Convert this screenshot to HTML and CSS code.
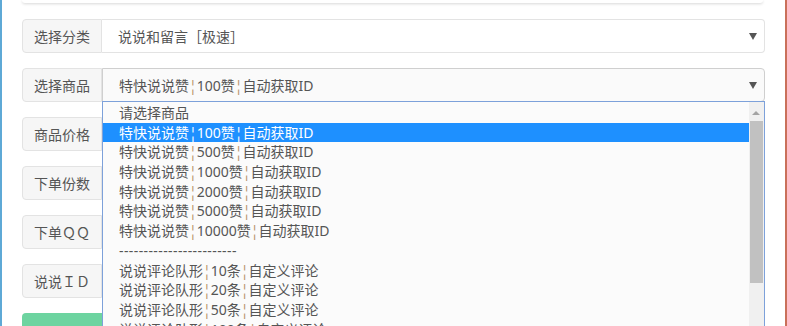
FILE: index.html
```html
<!DOCTYPE html>
<html lang="zh-CN">
<head>
<meta charset="utf-8">
<title>下单</title>
<link rel="stylesheet" href="styles.css">
</head>
<body>
<div class="page">
  <div class="top-card"></div>
  <form class="order-form">
    <div class="row">
      <span class="addon">选择分类</span>
      <div class="select">
        <span class="value">说说和留言［极速］</span>
        <span class="caret"></span>
      </div>
    </div>
    <div class="row">
      <span class="addon">选择商品</span>
      <div class="select open">
        <span class="value">特快说说赞<span class="sep">¦</span>100赞<span class="sep">¦</span>自动获取ID</span>
        <span class="caret"></span>
        <div class="dropdown">
          <div class="options">
            <div class="opt">请选择商品</div>
            <div class="opt active">特快说说赞<span class="sep">¦</span>100赞<span class="sep">¦</span>自动获取ID</div>
            <div class="opt">特快说说赞<span class="sep">¦</span>500赞<span class="sep">¦</span>自动获取ID</div>
            <div class="opt">特快说说赞<span class="sep">¦</span>1000赞<span class="sep">¦</span>自动获取ID</div>
            <div class="opt">特快说说赞<span class="sep">¦</span>2000赞<span class="sep">¦</span>自动获取ID</div>
            <div class="opt">特快说说赞<span class="sep">¦</span>5000赞<span class="sep">¦</span>自动获取ID</div>
            <div class="opt">特快说说赞<span class="sep">¦</span>10000赞<span class="sep">¦</span>自动获取ID</div>
            <div class="opt dashes">------------------------</div>
            <div class="opt">说说评论队形<span class="sep">¦</span>10条<span class="sep">¦</span>自定义评论</div>
            <div class="opt">说说评论队形<span class="sep">¦</span>20条<span class="sep">¦</span>自定义评论</div>
            <div class="opt">说说评论队形<span class="sep">¦</span>50条<span class="sep">¦</span>自定义评论</div>
            <div class="opt">说说评论队形<span class="sep">¦</span>100条<span class="sep">¦</span>自定义评论</div>
          </div>
          <div class="scrollbar">
            <span class="up"></span>
            <span class="thumb"></span>
          </div>
        </div>
      </div>
    </div>
    <div class="row">
      <span class="addon">商品价格</span>
      <div class="input"></div>
    </div>
    <div class="row">
      <span class="addon">下单份数</span>
      <div class="input"></div>
    </div>
    <div class="row">
      <span class="addon">下单ＱＱ</span>
      <div class="input"></div>
    </div>
    <div class="row">
      <span class="addon">说说ＩＤ</span>
      <div class="input"></div>
    </div>
    <div class="btn">立即购买</div>
  </form>
</div>
</body>
</html>
```

FILE: styles.css
```css
html, body {
  margin: 0;
  padding: 0;
  height: 326px;
  overflow: hidden;
}
body {
  background: linear-gradient(90deg, #5ea9d6 0, #5ea9d6 2px, transparent 2px, transparent 785px, #c9705a 785px),
              linear-gradient(180deg, #e07a55 0%, #b86a6a 60%, #8a6a78 100%);
  font-family: "Noto Sans", "Noto Sans CJK SC", sans-serif;
  font-size: 14px;
  color: #555;
}
.page {
  margin: 0 2px 0 2px;
  width: 783px;
  height: 326px;
  background: #fff;
  box-sizing: border-box;
  padding: 0 20px;
}
.top-card {
  height: 3px;
  margin-right: 2px;
  background: #fff;
  border-radius: 0 0 4px 4px;
  box-shadow: 0 1px 3px rgba(0, 0, 0, 0.16);
  margin-bottom: 16px;
}
.order-form {
  display: flex;
  flex-direction: column;
  gap: 15px;
}
.row {
  display: flex;
  height: 34px;
}
.addon {
  width: 80px;
  flex: none;
  box-sizing: border-box;
  background: #f6f6f6;
  border: 1px solid #e3e3e3;
  border-radius: 4px 0 0 4px;
  padding: 0 11px;
  display: flex;
  align-items: center;
  white-space: nowrap;
}
.select, .input {
  flex: 1;
  position: relative;
  box-sizing: border-box;
  border: 1px solid #e3e3e3;
  border-left: none;
  border-radius: 0 4px 4px 0;
  background: #fff;
  display: flex;
  align-items: center;
  justify-content: space-between;
  padding: 0 7px 0 16px;
}
.select.open {
  background: #fafafa;
  border-color: #cfcfcf;
  border-left: 1px solid #cfcfcf;
  padding-left: 16px;
}
.caret {
  width: 0;
  height: 0;
  border-left: 4px solid transparent;
  border-right: 4px solid transparent;
  border-top: 7px solid #555;
}
.sep {
  color: #b8926a;
}
.dropdown {
  position: absolute;
  top: 32px;
  left: -1px;
  right: -1px;
  height: 240px;
  border: 1px solid #7da1da;
  background: #fbfbfb;
  display: flex;
  z-index: 5;
}
.options {
  flex: 1;
  padding-top: 1px;
}
.opt {
  height: 19.7px;
  line-height: 19.7px;
  padding-left: 16px;
  color: #555;
  white-space: nowrap;
}
.opt.active {
  background: #1e90ff;
  color: #fff;
}
.opt.active .sep {
  color: #fff;
}
.opt.dashes {
  letter-spacing: 0.4px;
}
.scrollbar {
  width: 15px;
  flex: none;
  background: #f0f0f0;
  position: relative;
}
.scrollbar .up {
  position: absolute;
  top: 9px;
  left: 3px;
  width: 0;
  height: 0;
  border-left: 4px solid transparent;
  border-right: 4px solid transparent;
  border-bottom: 4px solid #a3a3a3;
}
.scrollbar .thumb {
  position: absolute;
  top: 19px;
  left: 1px;
  width: 13px;
  height: 162px;
  background: #c1c1c1;
}
.btn {
  height: 34px;
  background: #6dd4a0;
  border-radius: 4px;
  color: #fff;
  display: flex;
  align-items: center;
  justify-content: center;
}
```
